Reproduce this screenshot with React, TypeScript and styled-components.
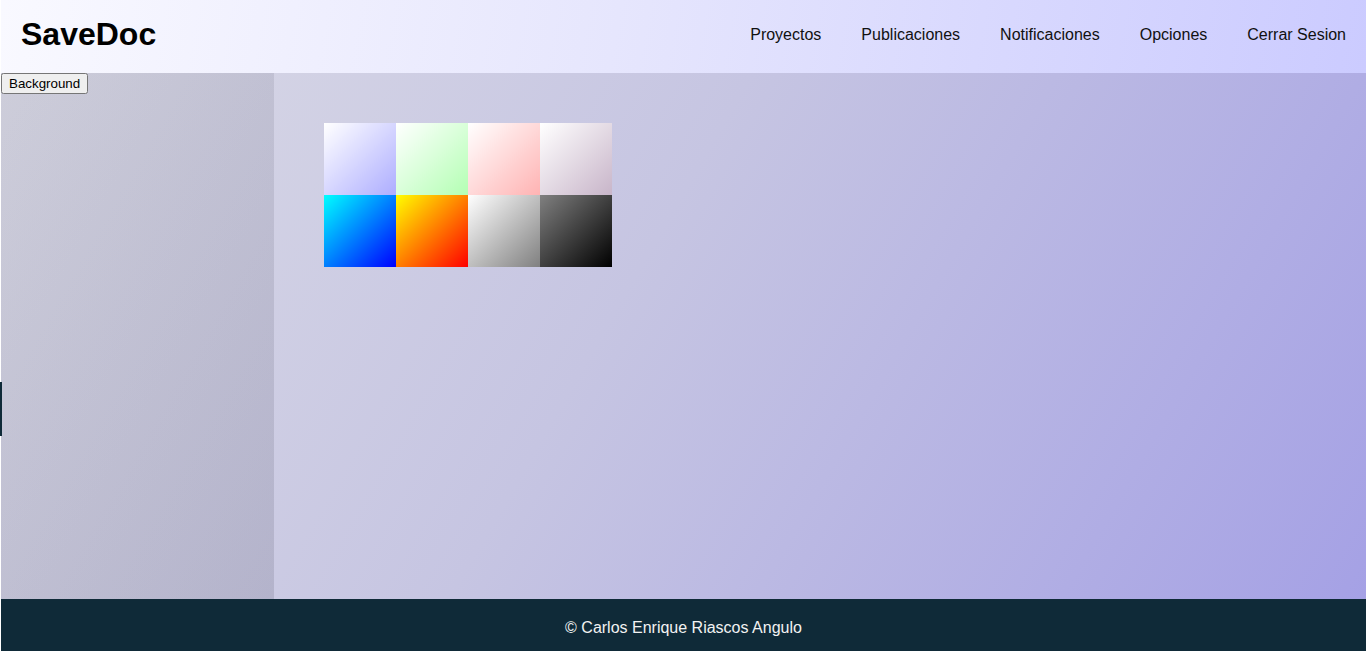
import { createGlobalStyle } from 'styled-components'
import styled from 'styled-components'

const GlobalStyle = createGlobalStyle`
html, body {
  margin: 0;
  padding: 0;
  background: #ffffff;
  font-family: "Liberation Sans", Arial, sans-serif;
}
`

//layout
const Page = styled.div`
position: relative;
display: flex;
flex-direction: column;
height: 651px;
padding-left: 1px;
background: #ffffff;
overflow: hidden;
`

const Header = styled.header`
display: flex;
align-items: center;
justify-content: space-between;
height: 73px;
box-sizing: border-box;
padding: 0 20px 4px 20px;
background: linear-gradient(100deg, #f9f9ff 0%, #e6e6fd 45%, #cbcbff 100%);
`

const Logo = styled.h1`
margin: 0;
font-size: 32px;
font-weight: bold;
color: #000;
`

const Nav = styled.nav`
display: flex;
gap: 40px;
a{
font-size: 16px;
color: #111;
text-decoration: none;
}
`

const Main = styled.main`
flex: 1;
display: flex;
background: linear-gradient(120deg, #dadae6 0%, #c6c5e2 45%, #a5a1e5 100%);
`

const Sidebar = styled.aside`
width: 273px;
flex-shrink: 0;
background: linear-gradient(120deg, rgba(60, 60, 80, 0.08), rgba(60, 60, 80, 0.16));
button{
display: block;
margin: 0;
font-family: "Liberation Sans", Arial, sans-serif;
font-size: 13.33px;
padding: 1px 6px;
}
`

const Content = styled.section`
flex: 1;
padding: 50px;
`

const Swatches = styled.div`
display: grid;
grid-template-columns: repeat(4, 72px);
grid-auto-rows: 72px;
`

const Swatch = styled.div<{ $from: string; $to: string }>`
background: linear-gradient(to bottom right, ${p => p.$from}, ${p => p.$to});
cursor: pointer;
`

const Footer = styled.footer`
height: 52px;
box-sizing: border-box;
padding-top: 6px;
display: flex;
align-items: center;
justify-content: center;
background: #0f2a38;
color: #f2f2f2;
font-size: 16px;
`

const Tab = styled.div`
position: absolute;
left: 0;
top: 382px;
width: 2px;
height: 54px;
background: #0f2a38;
`

const swatches = [
  ['#ffffff', '#adadff'],
  ['#ffffff', '#b3ffb3'],
  ['#ffffff', '#ffb3b3'],
  ['#ffffff', '#c8b5c9'],
  ['#00ffff', '#0000ff'],
  ['#ffff00', '#ff0000'],
  ['#ffffff', '#808080'],
  ['#808080', '#000000'],
]

export default function App() {
  return (
    <Page>
      <GlobalStyle />
      <Header>
        <Logo>SaveDoc</Logo>
        <Nav>
          <a href="#">Proyectos</a>
          <a href="#">Publicaciones</a>
          <a href="#">Notificaciones</a>
          <a href="#">Opciones</a>
          <a href="#">Cerrar Sesion</a>
        </Nav>
      </Header>
      <Main>
        <Sidebar>
          <button>Background</button>
        </Sidebar>
        <Content>
          <Swatches>
            {swatches.map(([a, b], i) => (
              <Swatch key={i} $from={a} $to={b} />
            ))}
          </Swatches>
        </Content>
      </Main>
      <Footer>© Carlos Enrique Riascos Angulo</Footer>
      <Tab />
    </Page>
  )
}
